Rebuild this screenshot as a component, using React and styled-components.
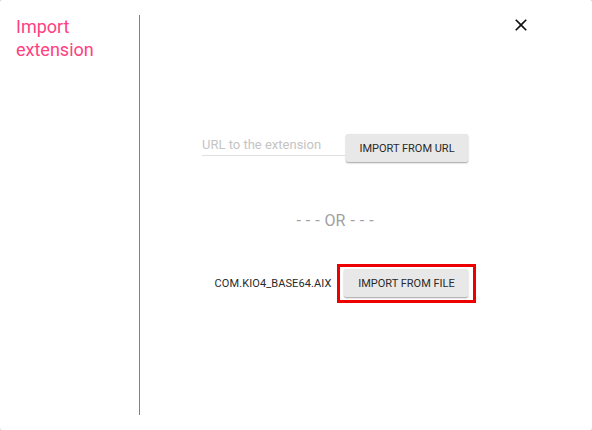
import React from 'react';
import styled, {createGlobalStyle} from 'styled-components';

const GlobalStyle = createGlobalStyle`
  html, body {
    margin: 0;
    padding: 0;
    background: #c8c8c8;
  }
  #root {
    width: 592px;
    height: 430px;
  }
`;

const Dialog = styled.div`
  position: relative;
  display: flex;
  width: 592px;
  height: 430px;
  box-sizing: border-box;
  background: #ffffff;
  border-radius: 2px;
  font-family: Roboto, "Liberation Sans", sans-serif;
`;

const Sidebar = styled.aside`
  width: 140px;
  flex-shrink: 0;
  box-sizing: border-box;
  margin: 15px 0 15px;
  padding: 0 16px;
  border-right: 1px solid #ff4081;
`;

const Title = styled.h2`
  margin: 0;
  font-size: 18px;
  line-height: 23px;
  font-weight: 400;
  color: #ff4081;
`;

const CloseButton = styled.button`
  position: absolute;
  top: 15px;
  left: 511px;
  width: 20px;
  height: 20px;
  padding: 0;
  border: none;
  background: transparent;
  color: #111;
  cursor: pointer;
  display: flex;
  align-items: center;
  justify-content: center;
`;

const Main = styled.main`
  flex: 0 0 390px;
  display: flex;
  flex-direction: column;
  align-items: center;
  padding-top: 134px;
`;

const Row = styled.div`
  display: flex;
  align-items: ${p => p.$align || 'center'};
  padding-left: ${p => p.$shift || 0}px;
`;

const UrlInput = styled.input`
  width: 143px;
  height: 22px;
  box-sizing: border-box;
  margin-right: 1px;
  padding: 0 0 1px 0;
  border: none;
  border-bottom: 1px solid #e0e0e0;
  outline: none;
  background: transparent;
  font-family: Roboto, "Liberation Sans", sans-serif;
  font-size: 13px;
  color: #333;
  &::placeholder {
    color: #c4c4c4;
  }
`;

const Button = styled.button`
  width: ${p => p.$width || 122}px;
  height: 28px;
  padding: 0;
  border: none;
  border-radius: 2px;
  background: #e8e8e8;
  box-shadow: 0 1px 2px rgba(0, 0, 0, 0.28), 0 1px 1px rgba(0, 0, 0, 0.12);
  font-family: Roboto, "Liberation Sans", sans-serif;
  font-size: 11px;
  color: #2a2a2a;
  text-transform: uppercase;
  cursor: pointer;
`;

const Divider = styled.div`
  margin-top: 49px;
  font-size: 16px;
  line-height: 19px;
  color: #a0a0a0;
  word-spacing: 1px;
`;

const FileName = styled.span`
  font-size: 11px;
  letter-spacing: 0.1px;
  color: #2a2a2a;
  margin-right: 6px;
`;

const Highlight = styled.div`
  border: 3px solid #ee0000;
  padding: 2px 5px 3px 4px;
  display: flex;
`;

const FileRow = styled(Row)`
  margin-top: 34px;
`;

export default function App() {
    return (
        <>
            <GlobalStyle/>
            <Dialog>
                <Sidebar>
                    <Title>Import extension</Title>
                </Sidebar>
                <Main>
                    <Row $align="flex-start">
                        <UrlInput placeholder="URL to the extension"/>
                        <Button>Import from URL</Button>
                    </Row>
                    <Divider>- - - OR - - -</Divider>
                    <FileRow $shift={21}>
                        <FileName>COM.KIO4_BASE64.AIX</FileName>
                        <Highlight>
                            <Button $width={124}>Import from file</Button>
                        </Highlight>
                    </FileRow>
                </Main>
                <CloseButton aria-label="close">
                    <svg width="20" height="20" viewBox="0 0 24 24">
                        <path fill="currentColor"
                              d="M19 6.41 17.59 5 12 10.59 6.41 5 5 6.41 10.59 12 5 17.59 6.41 19 12 13.41 17.59 19 19 17.59 13.41 12z"/>
                    </svg>
                </CloseButton>
            </Dialog>
        </>
    );
}
